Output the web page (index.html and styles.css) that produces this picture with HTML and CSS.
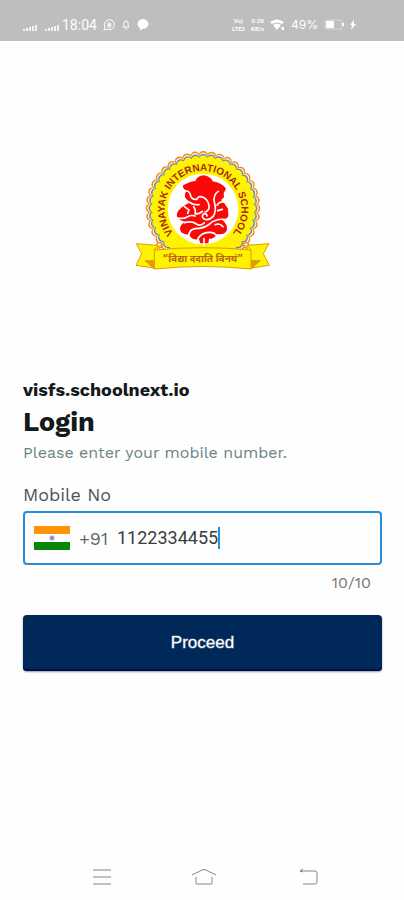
FILE: index.html
```html
<!DOCTYPE html>
<html lang="en">
<head>
<meta charset="utf-8">
<meta name="viewport" content="width=device-width, initial-scale=1">
<title>Login</title>
<link rel="stylesheet" href="styles.css">
</head>
<body>
<div class="screen">
  <header class="status">
    <div class="status-group">
      <svg class="signal" width="16" height="8" viewBox="0 0 16 8"><path d="M1 8V6h2v2zM4 8V5h2v3zM7 8V4h2v4zM10 8V3h2v5zM13 8V2h2v6z"/></svg>
      <svg class="signal" width="16" height="8" viewBox="0 0 16 8"><path d="M1 8V6h2v2zM4 8V5h2v3zM7 8V4h2v4zM10 8V3h2v5zM13 8V2h2v6z"/></svg>
      <span class="clock">18:04</span>
      <svg class="status-icon" width="12" height="12" viewBox="0 0 12 12" fill="none" stroke="#fff"><path d="M1 11l1-3a5 5 0 1 1 2 2z"/><path d="M5 8V4h2a1 1 0 0 1 0 2H5h2a1 1 0 0 1 0 2z"/></svg>
      <svg class="status-icon" width="10" height="10" viewBox="0 0 10 10" fill="none" stroke="#fff"><path d="M2 7q1-1 1-4a2 2 0 0 1 4 0q0 3 1 4zM4 9h2"/></svg>
      <svg class="status-icon" width="12" height="12" viewBox="0 0 12 12" fill="#fff"><path d="M6 0a6 5 0 1 1-1 10l-2 2V9A6 5 0 0 1 6 0z"/></svg>
    </div>
    <div class="status-group status-right">
      <span class="mini"><span>Vo)</span><span>LTE2</span></span>
      <span class="mini"><span>0.20</span><span>KB/s</span></span>
      <svg width="15" height="12" viewBox="0 0 15 12" fill="#fff"><path d="M0 3Q7-2 14 3l-2 2Q7 2 2 5zM3 6q4-3 8 0L7 11z"/><path d="M11 8h3v3h-2z"/></svg>
      <span class="percent">49%</span>
      <svg width="20" height="11" viewBox="0 0 20 11"><rect x="1" y="1" width="17" height="9" rx="2" fill="none" stroke="#d9d9d9"/><path fill="#fff" d="M2 2h8v7H2zM18 4h2v3h-2z"/></svg>
      <svg width="6" height="10" viewBox="0 0 6 10" fill="#fff"><path d="M4 0L0 5h2L1 10l5-6H4z"/></svg>
    </div>
  </header>

  <main class="content">
    <svg class="logo" viewBox="0 0 435 390" role="img" aria-label="Vinayak International School">
      <defs><path id="ring" d="M148 283A115 115 0 1 1 290 283"/></defs>
      <g fill="none" stroke-linecap="round">
        <circle cx="219" cy="190" r="158" pathLength="400" stroke-dasharray="0 10" stroke-width="28" stroke="#ef8a22"/>
        <circle cx="219" cy="190" r="155" pathLength="400" stroke-dasharray="0 10" stroke-width="25" stroke="#fff6d8"/>
        <circle cx="219" cy="190" r="150" pathLength="400" stroke-dasharray="0 10" stroke-width="27" stroke="#7184b0"/>
        <circle cx="219" cy="190" r="146" pathLength="400" stroke-dasharray="0 10" stroke-width="26" stroke="#fff200"/>
      </g>
      <circle cx="219" cy="190" r="148" fill="#fff200"/>
      <circle cx="219" cy="192" r="106" fill="#fff"/>
      <g transform="translate(117 73)">
        <path fill="#fb0909" d="M42 48Q62 36 80 34Q84 20 104 18Q126 22 131 36Q158 40 171 58L164 72L165 84L156 92L165 100L177 118L178 140Q172 152 160 152Q176 165 174 182Q168 198 144 194Q135 210 120 208L118 222H94L90 210Q70 214 60 196Q36 196 33 180Q32 165 50 158Q30 152 24 142Q22 130 30 122Q38 112 50 106Q60 104 60 96Q40 84 52 64Q40 58 42 48Z"/>
        <g fill="none" stroke="#fff" stroke-width="5" stroke-linecap="round" stroke-linejoin="round">
          <path d="M42 66Q60 60 64 76Q66 92 84 90Q88 78 102 84Q116 90 120 108Q122 124 108 128"/>
          <path d="M148 66Q132 76 136 98Q144 124 132 142Q118 156 104 148Q96 140 104 134Q112 130 114 140"/>
          <path d="M60 98Q72 108 90 106M46 112L60 122L56 132M74 112Q82 124 78 134Q92 134 100 126M24 146Q42 150 56 142Q66 136 78 140M46 160Q70 154 82 164Q96 172 106 160M60 198Q60 182 78 178Q104 178 122 164Q142 144 182 152M86 212Q90 196 112 190Q134 186 142 198M138 166Q152 160 162 172M105 208V228M144 108Q150 96 166 98M146 124L160 120"/>
        </g>
      </g>
      <text class="logo-name"><textPath href="#ring" startOffset="50%" text-anchor="middle">VINAYAK INTERNATIONAL SCHOOL</textPath></text>
      <g fill="#fff6d8" stroke="#ef8a22" stroke-width="4"><circle cx="88" cy="301" r="8"/><circle cx="348" cy="301" r="8"/></g>
      <g stroke="#dca000" stroke-width="3" stroke-linejoin="round">
        <path fill="#fff200" d="M83 301L19 296l16 30-17 35 67 10zM352 301l65-5-17 30 18 35-66 10z"/>
        <path fill="#e59b00" d="M45 347l28 0v25zM391 347h-28v25z"/>
        <path fill="#fff200" d="M73 315q145-14 290 0v57q-145-15-290 0z"/>
        <path fill="#fff200" d="M73 315q6-13 21-14M363 315q-6-13-21-14"/>
      </g>
      <text class="logo-motto" x="218" y="351" text-anchor="middle">“विद्या ददाति विनयं”</text>
    </svg>

    <form class="login">
      <p class="host">visfs.schoolnext.io</p>
      <h1 class="title">Login</h1>
      <p class="hint">Please enter your mobile number.</p>
      <label class="label" for="mobile">Mobile No</label>
      <div class="field">
        <svg class="flag" width="36" height="24" viewBox="0 0 36 24" role="img" aria-label="India"><path fill="#fff" d="M0 0h36v24H0z"/><path fill="#ff9208" d="M0 0h36v8H0z"/><path fill="#078607" d="M0 16h36v8H0z"/><circle cx="18" cy="12" r="3" fill="#d8d4f2"/><circle cx="18" cy="12" r="2" fill="#8d86cc"/></svg>
        <span class="code">+91</span>
        <input class="number" id="mobile" type="tel" maxlength="10" value="1122334455">
        <span class="caret"></span>
      </div>
      <p class="counter">10/10</p>
      <button class="proceed" type="button">Proceed</button>
    </form>
  </main>

  <nav class="system-nav">
    <button type="button" aria-label="Recent apps"><svg width="28" height="24" viewBox="0 0 28 24"><path d="M5 5h18M5 12h18M5 19h18"/></svg></button>
    <button type="button" aria-label="Home"><svg width="28" height="24" viewBox="0 0 28 24"><path d="M0 10L10 5q2-1 4 0l10 5M4 12v6q0 1 1 1h14q1 0 1-1v-6"/></svg></button>
    <button type="button" aria-label="Back"><svg width="28" height="24" viewBox="0 0 28 24"><path d="M8 4L5 6l3 1M5 6h15q2 0 2 2v9q0 2-2 2H8"/></svg></button>
  </nav>
</div>
</body>
</html>
```
FILE: styles.css
```css
* { box-sizing: border-box; }

body {
  margin: 0;
  background: #fefefe;
  color: #14191b;
  font-family: "Work Sans", Inter, sans-serif;
}

p, h1 { margin: 0; }

.screen {
  display: flex;
  flex-direction: column;
  min-height: 100vh;
}

.status {
  display: flex;
  justify-content: space-between;
  height: 41px;
  padding: 8px 48px 0 22px;
  background: #bebebe;
  color: #fff;
}

.status-group {
  display: flex;
  align-items: center;
  gap: 6px;
}

.signal {
  margin-top: 4px;
  fill: #ffffffcc;
}

.clock {
  margin-left: -4px;
  font: 14px Roboto, sans-serif;
}

.mini {
  display: grid;
  justify-items: center;
  font: bold 6px/8px Roboto, sans-serif;
}

.percent { font: 12px Inter, sans-serif; }

.content {
  flex: 1;
  padding: 104px 22px 0 23px;
}

.logo {
  display: block;
  width: 145px;
  margin: 0 auto;
}

.logo-name {
  fill: #a8280f;
  font: bold 30px "Liberation Sans", sans-serif;
}

.logo-motto {
  fill: #b9650f;
  font: bold 30px "Noto Sans Devanagari", "Noto Sans", sans-serif;
}

.login {
  display: flex;
  flex-direction: column;
  margin-top: 103px;
}

.host {
  font-size: 18px;
  line-height: 24px;
  font-weight: 700;
}

.title {
  margin-top: 4px;
  font-size: 27px;
  line-height: 32px;
  font-weight: 700;
}

.hint {
  margin-top: 4px;
  color: #6c8484;
  font-size: 16px;
  line-height: 22px;
}

.label {
  margin-top: 19px;
  color: #4b5657;
  font-size: 18px;
  line-height: 24px;
}

.field {
  display: flex;
  align-items: center;
  height: 54px;
  margin-top: 4px;
  padding: 0 9px;
  border: 2px solid #248fd8;
  border-radius: 4px;
}

.code {
  margin: 0 9px;
  color: #5c6868;
  font-size: 18px;
}

.number {
  width: 10ch;
  padding: 0 0 2px;
  border: 0;
  outline: 0;
  background: none;
  color: #383d3e;
  font: 18px Roboto, sans-serif;
}

.caret {
  width: 2px;
  height: 22px;
  background: #248fd8;
}

.counter {
  margin: 8px 11px 0 0;
  color: #777;
  font-size: 16px;
  line-height: 20px;
  text-align: right;
}

.proceed {
  height: 56px;
  margin-top: 22px;
  border: 0;
  border-radius: 4px;
  background: #002859;
  box-shadow: 0 1px 2px #0006, inset 0 -2px #001049;
  color: #fff;
  font: 500 17px "Liberation Sans", sans-serif;
  -webkit-text-stroke: 1px #ffffff60;
}

.system-nav {
  display: flex;
  justify-content: space-between;
  padding: 0 81px 11px 88px;
}

.system-nav button {
  display: flex;
  padding: 0;
  border: 0;
  background: none;
}

.system-nav svg {
  fill: none;
  stroke: #858585;
}
```
